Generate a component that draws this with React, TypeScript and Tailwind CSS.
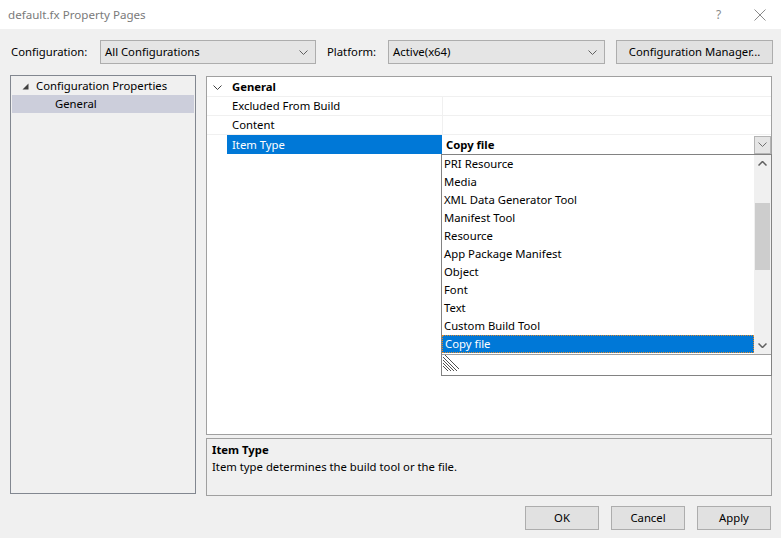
import React from 'react'

const items = [
  'PRI Resource',
  'Media',
  'XML Data Generator Tool',
  'Manifest Tool',
  'Resource',
  'App Package Manifest',
  'Object',
  'Font',
  'Text',
  'Custom Build Tool',
  'Copy file',
]

function Chevron({ className = '' }: { className?: string }) {
  return (
    <svg width="9" height="5" viewBox="0 0 9 5" className={className}>
      <path d="M0.5 0.5 L4.5 4.5 L8.5 0.5" fill="none" stroke="currentColor" strokeWidth="1" />
    </svg>
  )
}

function Combo({ value, width }: { value: string; width: string }) {
  return (
    <div
      className={`${width} flex h-[24px] items-center justify-between border border-[#adadad] bg-[#e5e5e5] pt-[1px] pr-[7px] pl-[4px]`}
    >
      <span>{value}</span>
      <Chevron className="text-[#606060]" />
    </div>
  )
}

function Button({ label, width }: { label: string; width: string }) {
  return (
    <div
      className={`${width} flex h-[24px] items-center justify-center border border-[#adadad] bg-[#e1e1e1] pt-[1px]`}
    >
      {label}
    </div>
  )
}

function GridRow({ name }: { name: string }) {
  return (
    <div className="flex h-[19px] border-b border-[#f0f0f0]">
      <div className="w-[20px] shrink-0" />
      <div className="flex w-[215px] shrink-0 items-center pt-[1px] pl-[5px]">{name}</div>
      <div className="flex-1 border-l border-[#f0f0f0]" />
    </div>
  )
}

export default function App() {
  return (
    <div
      className="flex h-[538px] w-[781px] flex-col bg-[#f0f0f0] text-[11.3px] text-black"
      style={{ fontFamily: '"Segoe UI", "Noto Sans", sans-serif' }}
    >
      {/* title bar */}
      <div className="flex h-[29px] shrink-0 items-center bg-white pl-[8px] text-[#7a7a7a]">
        <span className="flex-1 text-[11.6px]">default.fx Property Pages</span>
        <span className="w-[27px] text-left text-[12px] text-[#8a8a8a]">?</span>
        <svg width="38" height="12" viewBox="0 0 38 12">
          <path d="M11.5 0.5 L22.5 11.5 M22.5 0.5 L11.5 11.5" stroke="#8a8a8a" strokeWidth="1" />
        </svg>
      </div>

      {/* configuration row */}
      <div className="mt-[11px] flex items-center pl-[11px]">
        <span className="w-[89px]">Configuration:</span>
        <Combo value="All Configurations" width="w-[216px]" />
        <span className="ml-[11px] w-[61px]">Platform:</span>
        <Combo value="Active(x64)" width="w-[217px]" />
        <div className="ml-[11px]">
          <Button label="Configuration Manager..." width="w-[157px]" />
        </div>
      </div>

      {/* main area */}
      <div className="mt-[11px] flex pl-[10px]">
        {/* tree */}
        <div className="h-[419px] w-[186px] border border-[#828790] bg-[#f0f0f0] px-[1px] pt-[1px]">
          <div className="flex h-[18px] items-center pt-[1px] pl-[10px]">
            <svg width="7" height="7" viewBox="0 0 7 7">
              <path d="M6.5 0.5 L6.5 6.5 L0.5 6.5 Z" fill="#404040" />
            </svg>
            <span className="ml-[7px]">Configuration Properties</span>
          </div>
          <div className="flex h-[18px] items-center bg-[#cccedb] pt-[1px] pl-[43px]">General</div>
        </div>

        {/* right column */}
        <div className="mt-[1px] ml-[10px] flex w-[566px] flex-col">
          <div className="relative h-[359px] border border-[#a0a0a0] bg-white pt-[1px]">
            <div className="flex h-[19px] border-b border-[#f0f0f0]">
              <div className="flex w-[20px] shrink-0 items-center justify-center">
                <Chevron className="text-[#404040]" />
              </div>
              <div className="flex items-center pt-[1px] pl-[5px] font-bold">General</div>
            </div>
            <GridRow name="Excluded From Build" />
            <GridRow name="Content" />
            <div className="flex h-[19px]">
              <div className="w-[20px] shrink-0" />
              <div className="flex w-[215px] shrink-0 items-center bg-[#0078d7] pt-[1px] pl-[5px] text-white">
                Item Type
              </div>
              <div className="flex flex-1 items-center justify-between pl-[4px]">
                <span className="pt-[1px] font-bold">Copy file</span>
                <div className="flex h-[18px] w-[17px] items-center justify-center border border-[#b4b4b4] bg-[#e5e5e5]">
                  <Chevron className="text-[#707070]" />
                </div>
              </div>
            </div>

            {/* dropdown list */}
            <div className="absolute top-[77px] left-[234px] flex h-[222px] w-[331px] flex-col border border-[#828282] bg-white">
              <div className="flex h-[199px]">
                <div className="flex flex-1 flex-col">
                  {items.map((it) => (
                    <div
                      key={it}
                      className={`flex h-[18px] items-center pt-[1px] pl-[2px] ${
                        it === 'Copy file'
                          ? 'border border-dotted border-[#e08a2c] bg-[#0078d7] pl-[1px] text-white'
                          : ''
                      }`}
                    >
                      {it}
                    </div>
                  ))}
                </div>
                <div className="flex w-[17px] flex-col items-center bg-[#f0f0f0]">
                  <div className="flex h-[17px] items-center justify-center">
                    <svg width="9" height="5" viewBox="0 0 9 5">
                      <path d="M0.5 4.5 L4.5 0.5 L8.5 4.5" fill="none" stroke="#606060" strokeWidth="1.5" />
                    </svg>
                  </div>
                  <div className="mt-[31px] h-[67px] w-[15px] bg-[#cdcdcd]" />
                  <div className="flex-1" />
                  <div className="flex h-[17px] items-center justify-center">
                    <svg width="9" height="5" viewBox="0 0 9 5">
                      <path d="M0.5 0.5 L4.5 4.5 L8.5 0.5" fill="none" stroke="#606060" strokeWidth="1.5" />
                    </svg>
                  </div>
                </div>
              </div>
              <div className="flex-1 border-t border-[#a0a0a0] pl-[1px]">
                <svg width="16" height="16" viewBox="0 0 16 16">
                  <path
                    d="M0 2 L14 16 M0 5 L11 16 M0 8 L8 16 M0 11 L5 16 M2 0 L16 14"
                    stroke="#505050"
                    strokeWidth="1"
                  />
                </svg>
              </div>
            </div>
          </div>

          {/* description */}
          <div className="mt-[3px] h-[58px] border border-[#a0a0a0] bg-[#f0f0f0] px-[5px] pt-[3px]">
            <div className="font-bold">Item Type</div>
            <div>Item type determines the build tool or the file.</div>
          </div>
        </div>
      </div>

      {/* buttons */}
      <div className="mt-[10px] flex justify-end gap-[12px] pr-[10px]">
        <Button label="OK" width="w-[74px]" />
        <Button label="Cancel" width="w-[74px]" />
        <Button label="Apply" width="w-[74px]" />
      </div>
    </div>
  )
}
